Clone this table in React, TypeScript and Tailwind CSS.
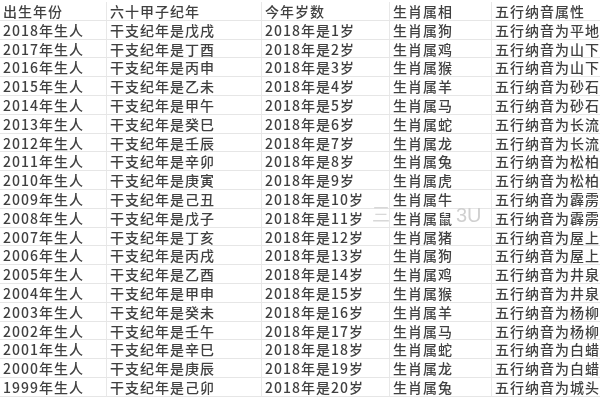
import React from "react";

const zodiac = ["狗","鸡","猴","羊","马","蛇","龙","兔","虎","牛","鼠","猪","狗","鸡","猴","羊","马","蛇","龙","兔"];
const ganzhi = ["戊戌","丁酉","丙申","乙未","甲午","癸巳","壬辰","辛卯","庚寅","己丑","戊子","丁亥","丙戌","乙酉","甲申","癸未","壬午","辛巳","庚辰","己卯"];
const nayin = ["平地木","山下火","山下火","砂石金","砂石金","长流水","长流水","松柏木","松柏木","霹雳火","霹雳火","屋上土","屋上土","井泉水","井泉水","杨柳木","杨柳木","白蜡金","白蜡金","城头土"];

const rows: string[][] = [["出生年份", "六十甲子纪年", "今年岁数", "生肖属相", "五行纳音属性"]];
for (let i = 0; i < 20; i++) {
  rows.push([
    `${2018 - i}年生人`,
    `干支纪年是${ganzhi[i]}`,
    `2018年是${i + 1}岁`,
    `生肖属${zodiac[i]}`,
    `五行纳音为${nayin[i]}`,
  ]);
}

export default function App() {
  return (
    <div
      className="relative w-[600px] h-[400px] overflow-hidden bg-white pt-[2px]"
      style={{ fontFamily: '"Noto Sans CJK SC", "Noto Sans", sans-serif' }}
    >
      <div className="blur-[0.45px]">
        {rows.map((r, i) => (
          <div
            key={i}
            className="grid grid-cols-[107px_155px_128px_102px_1fr] h-[18.8px] border-b border-[#e6e6e6] text-[14px] leading-[18px] tracking-[1px] font-medium text-[#404040] whitespace-nowrap"
          >
            <div className="pl-[3px] border-r border-[#e8e8e8] overflow-hidden">{r[0]}</div>
            <div className="pl-[3px] border-r border-[#e8e8e8] overflow-hidden">{r[1]}</div>
            <div className="pl-[3px] border-r border-[#e8e8e8] overflow-hidden">{r[2]}</div>
            <div className="pl-[3px] border-r border-[#e8e8e8] overflow-hidden">{r[3]}</div>
            <div className="pl-[3px] overflow-hidden">{r[4]}</div>
          </div>
        ))}
      </div>
      <div className="absolute left-[372px] top-[203px] text-[18px] leading-[20px] text-[#d8d8d8] blur-[0.6px]">三</div>
      <div
        className="absolute left-[456px] top-[204px] text-[20px] leading-[22px] text-[#d0d0d0] blur-[0.6px]"
        style={{ fontFamily: '"Liberation Sans", sans-serif' }}
      >
        3U
      </div>
    </div>
  );
}
